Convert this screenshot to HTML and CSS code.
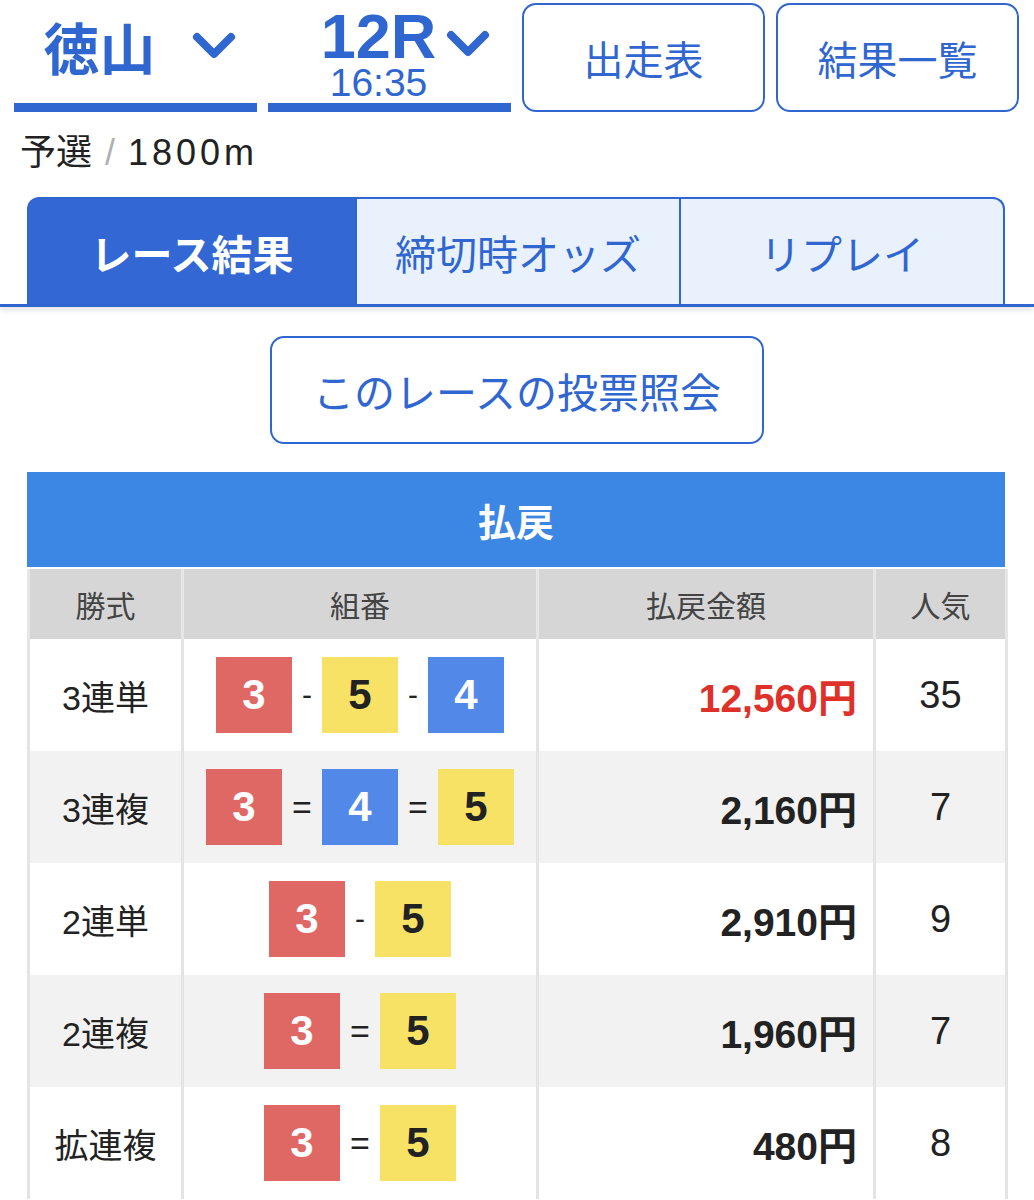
FILE: index.html
```html
<!DOCTYPE html>
<html lang="ja">
<head>
<meta charset="utf-8">
<link rel="stylesheet" href="styles.css">
</head>
<body>
<header class="topbar">
  <div class="select">
    <span class="venue">徳山</span>
    <svg class="chev" viewBox="0 0 44 28" width="44" height="28"><polyline points="5,5 22,22 39,5" fill="none" stroke="#2f66d0" stroke-width="8" stroke-linecap="round" stroke-linejoin="round"/></svg>
  </div>
  <div class="select race">
    <div class="racebox"><span class="rno">12R</span><span class="time">16:35</span></div>
    <svg class="chev" viewBox="0 0 44 28" width="44" height="28"><polyline points="5,5 22,22 39,5" fill="none" stroke="#2f66d0" stroke-width="8" stroke-linecap="round" stroke-linejoin="round"/></svg>
  </div>
  <a class="btn top">出走表</a>
  <a class="btn top">結果一覧</a>
</header>

<p class="meta">予選<span class="slash">/</span><span class="dist">1800m</span></p>

<nav class="tabwrap">
  <div class="tabs">
    <div class="tab active">レース結果</div>
    <div class="tab">締切時オッズ</div>
    <div class="tab">リプレイ</div>
  </div>
</nav>

<div class="inq"><a class="btn inqbtn">このレースの投票照会</a></div>

<section class="payout">
  <h2 class="ptitle">払戻</h2>
  <table class="ptable">
    <colgroup><col class="c1"><col class="c2"><col class="c3"><col class="c4"></colgroup>
    <thead>
      <tr><th>勝式</th><th>組番</th><th>払戻金額</th><th>人気</th></tr>
    </thead>
    <tbody>
      <tr>
        <td class="kind">3連単</td>
        <td><div class="combo"><span class="n n3">3</span><span class="sep">-</span><span class="n n5">5</span><span class="sep">-</span><span class="n n4">4</span></div></td>
        <td class="amt hit">12,560円</td>
        <td class="pop">35</td>
      </tr>
      <tr class="alt">
        <td class="kind">3連複</td>
        <td><div class="combo"><span class="n n3">3</span><span class="sep eq">=</span><span class="n n4">4</span><span class="sep eq">=</span><span class="n n5">5</span></div></td>
        <td class="amt">2,160円</td>
        <td class="pop">7</td>
      </tr>
      <tr>
        <td class="kind">2連単</td>
        <td><div class="combo"><span class="n n3">3</span><span class="sep">-</span><span class="n n5">5</span></div></td>
        <td class="amt">2,910円</td>
        <td class="pop">9</td>
      </tr>
      <tr class="alt">
        <td class="kind">2連複</td>
        <td><div class="combo"><span class="n n3">3</span><span class="sep eq">=</span><span class="n n5">5</span></div></td>
        <td class="amt">1,960円</td>
        <td class="pop">7</td>
      </tr>
      <tr>
        <td class="kind">拡連複</td>
        <td><div class="combo"><span class="n n3">3</span><span class="sep eq">=</span><span class="n n5">5</span></div></td>
        <td class="amt">480円</td>
        <td class="pop">8</td>
      </tr>
    </tbody>
  </table>
</section>
</body>
</html>
```

FILE: styles.css
```css
* { box-sizing: border-box; }
html, body { margin: 0; padding: 0; background: #fff; }
body {
  font-family: "Liberation Sans", "Noto Sans CJK JP", sans-serif;
  color: #222;
  width: 1034px;
  overflow: hidden;
}

.topbar {
  display: flex;
  gap: 11px;
  padding: 3px 15px 0 14px;
  height: 112px;
}
.select {
  width: 243px;
  height: 109px;
  border-bottom: 9px solid #2f66d0;
  display: flex;
  align-items: center;
  justify-content: center;
  gap: 36px;
  padding-left: 8px;
  color: #2f66d0;
}
.venue {
  font-family: "Noto Sans CJK JP", sans-serif;
  font-weight: 700;
  font-size: 56px;
  line-height: 1;
  margin-top: -14px;
}
.select .chev { margin-top: -14px; }
.select.race { gap: 10px; padding-left: 32px; }
.racebox {
  display: flex;
  flex-direction: column;
  align-items: center;
  margin-top: 0;
}
.rno { font-weight: 700; font-size: 63px; line-height: 60px; }
.time { font-size: 39px; line-height: 34px; }
.race .chev { margin-top: -18px; }

.btn {
  display: flex;
  align-items: center;
  justify-content: center;
  border: 2px solid #2f66d0;
  border-radius: 14px;
  color: #2f66d0;
  font-family: "Noto Sans CJK JP", sans-serif;
  background: #fff;
}
.btn.top {
  width: 243px;
  height: 109px;
  font-size: 40px;
}

.meta {
  margin: 0;
  padding: 19px 0 0 20px;
  height: 85px;
  font-size: 36px;
  line-height: 44px;
  color: #222;
}
.dist { letter-spacing: 4px; }
.slash { color: #b0b0b0; margin: 0 13px; font-weight: 300; }

.tabwrap {
  border-bottom: 3px solid #2f66d0;
  box-shadow: 0 4px 5px rgba(0, 0, 0, 0.09);
  padding: 0 29px 0 27px;
}
.tabs {
  display: grid;
  grid-template-columns: 330px 324px 324px;
  height: 107px;
}
.tab {
  display: flex;
  align-items: center;
  justify-content: center;
  font-family: "Noto Sans CJK JP", sans-serif;
  font-size: 41px;
  color: #2f66d0;
  background: #e9f1fc;
  border: 2px solid #2f66d0;
  border-bottom: none;
  border-left: none;
}
.tab:first-child { border-left: 2px solid #2f66d0; border-top-left-radius: 12px; }
.tab:last-child { border-top-right-radius: 12px; }
.tab.active {
  background: #3367d4;
  color: #fff;
  font-weight: 700;
}

.inq {
  display: flex;
  justify-content: center;
  padding: 29px 0 28px 0;
}
.inqbtn {
  width: 494px;
  height: 108px;
  font-size: 41px;
}

.payout { margin: 0 29px 0 27px; }
.ptitle {
  margin: 0;
  height: 95px;
  background: #3c87e3;
  color: #fff;
  font-family: "Noto Sans CJK JP", sans-serif;
  font-size: 38px;
  font-weight: 700;
  display: flex;
  align-items: center;
  justify-content: center;
}
.ptable {
  width: 978px;
  border-collapse: collapse;
  table-layout: fixed;
  margin-top: 2px;
}
.c1 { width: 154px; }
.c2 { width: 355px; }
.c3 { width: 337px; }
.c4 { width: 132px; }
.ptable th, .ptable td {
  border-left: 3px solid #e4e4e4;
  border-right: 3px solid #e4e4e4;
  padding: 0;
}
.ptable th {
  height: 70px;
  background: #d6d6d6;
  color: #444;
  font-family: "Noto Sans CJK JP", sans-serif;
  font-size: 30px;
  font-weight: 400;
  border-color: #e6e6e6;
}
.ptable td {
  height: 112px;
  text-align: center;
  vertical-align: middle;
}
.ptable tr.alt td { background: #f2f2f2; }
.kind { font-size: 34px; color: #222; }
.combo {
  display: flex;
  justify-content: center;
  align-items: center;
  gap: 10px;
}
.n {
  width: 76px;
  height: 76px;
  display: flex;
  align-items: center;
  justify-content: center;
  font-size: 42px;
  font-weight: 700;
}
.n3 { background: #e06864; color: #fff; }
.n4 { background: #5288e8; color: #fff; }
.n5 { background: #f7e266; color: #222; }
.sep { font-size: 30px; color: #222; width: 10px; text-align: center; }
.sep.eq { width: 20px; font-size: 34px; }
.amt {
  text-align: right !important;
  padding-right: 16px !important;
  font-size: 39px;
  font-weight: 700;
  color: #222;
}
.amt.hit { color: #e0302a; }
.pop { font-size: 38px; color: #222; }
```
